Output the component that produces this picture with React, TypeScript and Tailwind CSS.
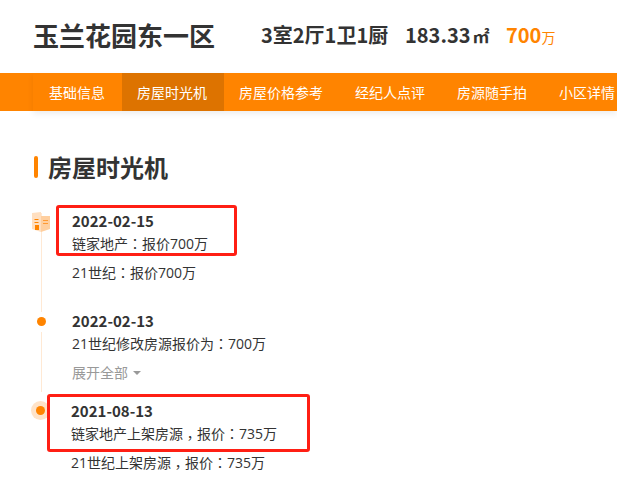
const FONT = "font-['Noto_Sans_CJK_SC',sans-serif]";
const BODY_FONT = "font-['Open_Sans','Noto_Sans_CJK_SC',sans-serif]";

const NAV_ITEMS = ['基础信息', '房屋时光机', '房屋价格参考', '经纪人点评', '房源随手拍', '小区详情'];

// the reference font centres these marks in their cell
function Colon() {
  return <span className="font-['Noto_Sans_CJK_TC']">：</span>;
}

function Comma() {
  return <span className="inline-block translate-y-[4px] font-['Noto_Sans_CJK_TC']">，</span>;
}

function BookIcon() {
  return (
    <svg width="18" height="20" viewBox="0 0 18 20" className="block">
      <path d="M0 1 L9 0 V20 L0 17 Z" fill="#ffdfc0" />
      <path d="M9 4 H18 V17 L9 20 Z" fill="#ffcf9f" />
      <rect x="2.5" y="7" width="4" height="1" fill="#ff8400" />
      <rect x="2.5" y="10" width="4" height="1" fill="#ff8400" />
      <rect x="11" y="8" width="5" height="1" fill="#ff9a33" />
      <rect x="11" y="11" width="5" height="1" fill="#ff9a33" />
      <rect x="3" y="13" width="4" height="5" fill="#ff8400" />
    </svg>
  );
}

export default function App() {
  return (
    <div className={`relative w-[617px] h-[489px] overflow-hidden bg-white text-[#333] ${FONT}`}>
      {/* Header */}
      <div className="flex items-center h-[73px] pl-[33px] pb-[3px]">
        <h1 className="w-[228px] shrink-0 text-[26px] font-bold leading-none">玉兰花园东一区</h1>
        <div className="flex items-baseline whitespace-nowrap font-bold text-[20px] leading-none">
          <span className="w-[144px]">3室2厅1卫1厨</span>
          <span className="w-[101px]">183.33<span className="ml-[2px] text-[17px]">㎡</span></span>
          <span className="text-[#ff8400]">700<span className="text-[14px] font-normal">万</span></span>
        </div>
      </div>

      {/* Nav */}
      <nav className="h-[38px] bg-[#ff8400]">
        <div className="flex h-[38px] ml-[33px] pl-px shadow-[0_3px_6px_rgba(0,0,0,0.07)]">
          {NAV_ITEMS.map((item, i) => (
            <div
              key={item}
              className={`pl-[15px] pr-[17px] shrink-0 whitespace-nowrap text-[14px] leading-[38px] text-white ${i === 1 ? 'bg-[#dd7300]' : ''}`}
            >
              {item}
            </div>
          ))}
        </div>
      </nav>

      {/* Section title */}
      <div className="flex items-center mt-[45px] ml-[34px] h-[22px]">
        <span className="w-[4px] h-[22px] rounded-sm bg-[#ff8400]" />
        <h2 className="ml-[10px] text-[24px] font-bold leading-none">房屋时光机</h2>
      </div>

      {/* Timeline */}
      <div className={`relative mt-[31px] pl-[72px] text-[14px] leading-[23px] ${BODY_FONT}`}>
        <span className="absolute left-[41px] top-[4px] w-px h-[99px] bg-[#ffe9d4]" />
        <span className="absolute left-[41px] top-[123px] w-px h-[60px] bg-[#ffe9d4]" />
        <span className="absolute left-[32px] top-[3px]"><BookIcon /></span>
        <span className="absolute left-[37px] top-[108px] w-[9px] h-[9px] rounded-full bg-[#ff8400]" />
        <span className="absolute left-[31px] top-[192px] w-[19px] h-[19px] rounded-full bg-[#ffe3c8] flex items-center justify-center">
          <span className="w-[9px] h-[9px] rounded-full bg-[#ff8400]" />
        </span>

        <div className="h-[100px]">
          <div className={`text-[15px] font-bold ${FONT}`}>2022-02-15</div>
          <div>链家地产<Colon />报价700万</div>
          <div className="mt-[6px]">21世纪<Colon />报价700万</div>
        </div>
        <div className="h-[90px]">
          <div className={`text-[15px] font-bold ${FONT}`}>2022-02-13</div>
          <div>21世纪修改房源报价为<Colon />700万</div>
          <div className="mt-[6px] text-[#999] flex items-center">
            展开全部
            <span className="ml-[5px] border-x-[4px] border-x-transparent border-t-[4px] border-t-[#999]" />
          </div>
        </div>
        <div className="-ml-px">
          <div className={`text-[15px] font-bold ${FONT}`}>2021-08-13</div>
          <div>链家地产上架房源<Comma />报价<Colon />735万</div>
          <div className="mt-[6px]">21世纪上架房源<Comma />报价<Colon />735万</div>
        </div>
      </div>

      {/* Red annotation boxes */}
      <div className="absolute left-[56px] top-[205px] w-[181px] h-[51px] border-[3px] border-[#ff1f14] rounded-[3px]" />
      <div className="absolute left-[47px] top-[394px] w-[263px] h-[58px] border-[3px] border-[#ff1f14] rounded-[3px]" />
    </div>
  );
}
